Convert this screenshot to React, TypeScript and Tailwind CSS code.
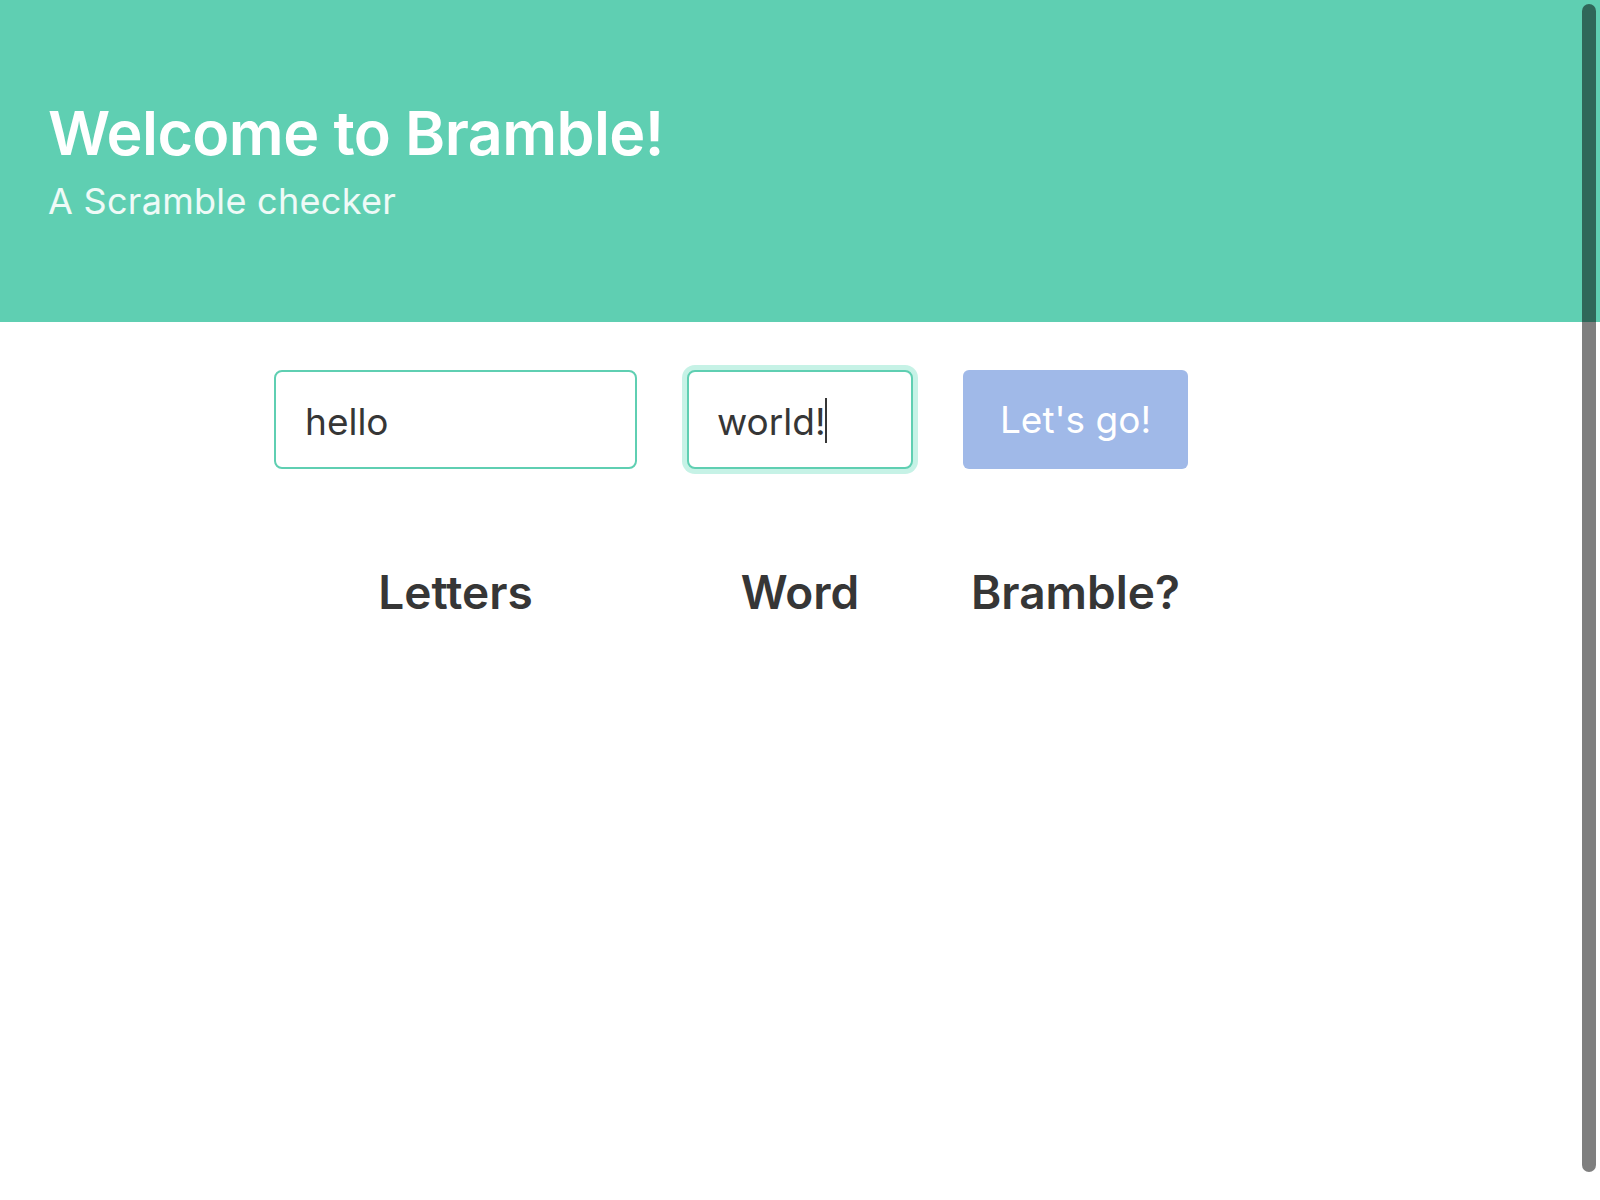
export default function App() {
  return (
    <div
      className="relative h-[1200px] overflow-hidden bg-white text-[#363636]"
      style={{ fontFamily: "Inter, 'Noto Sans', sans-serif" }}
    >
      <header className="h-[322px] bg-[#5fcfb2] px-[48px] pt-[94px]">
        <h1 className="text-[61px] font-semibold leading-[78px] tracking-[-0.6px] text-white">
          Welcome to Bramble!
        </h1>
        <p className="mt-[7px] text-[36px] leading-[44px] tracking-[0.3px] text-white/90">
          A Scramble checker
        </p>
      </header>

      <main className="pl-[274px] pt-[48px]">
        <div className="grid grid-cols-[363px_226px_225px] gap-x-[50px]">
          <input
            readOnly
            value="hello"
            className="h-[99px] rounded-[8px] border-2 border-[#5fcfb2] bg-white px-[29px] pt-[3px] text-[37px] text-[#363636] outline-none"
          />
          <div className="relative">
            <input
              readOnly
              value="world!"
              className="h-[99px] w-full rounded-[8px] border-2 border-[#5fcfb2] bg-white px-[28px] pt-[3px] text-[37px] text-[#363636] outline-none ring-[5px] ring-[#c6f2e6]"
            />
            <span className="absolute left-[138px] top-[28px] h-[45px] w-[2px] bg-[#363636]" />
          </div>
          <button className="h-[99px] rounded-[6px] bg-[#a0b9e8] text-[37px] text-white">
            Let's go!
          </button>

          <h2 className="mt-[89px] text-center text-[46px] font-semibold">Letters</h2>
          <h2 className="mt-[89px] text-center text-[46px] font-semibold">Word</h2>
          <h2 className="mt-[89px] text-center text-[46px] font-semibold">Bramble?</h2>
        </div>
      </main>

      {/* overlay scrollbar thumb */}
      <div className="absolute right-[4px] top-[4px] h-[1168px] w-[14px] rounded-full bg-black/50" />
    </div>
  );
}
